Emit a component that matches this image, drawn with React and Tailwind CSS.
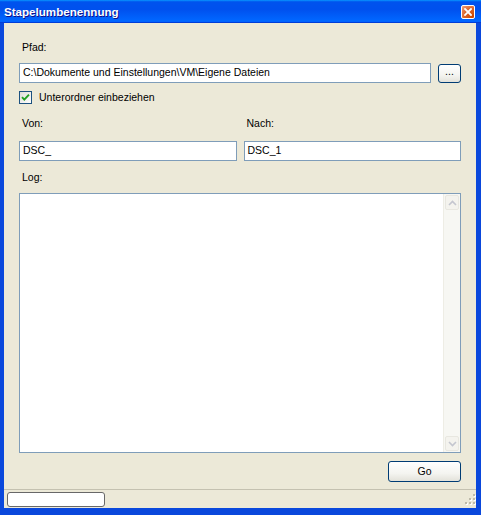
import React from 'react';

/* ─── Small XP-style pieces ─────────────────────────────────── */
const CloseGlyph = () => (
  <svg width="8" height="8" viewBox="0 0 8 8">
    <path d="M1 1l6 6M7 1l-6 6" stroke="#fff" strokeWidth="1.8" strokeLinecap="square" />
  </svg>
);

const CheckGlyph = () => (
  <svg width="9" height="9" viewBox="0 0 9 9">
    <path d="M1 4.2l2.3 2.4L8 1.6" fill="none" stroke="#21a121" strokeWidth="1.9" />
  </svg>
);

const Chevron = ({ up }) => (
  <svg width="9" height="6" viewBox="0 0 9 6">
    <path d={up ? 'M1 5l3.5-3.5L8 5' : 'M1 1l3.5 3.5L8 1'} fill="none" stroke="#c4c6cf" strokeWidth="1.6" />
  </svg>
);

const Grip = () => (
  <svg width="12" height="12" viewBox="0 0 12 12">
    {[[9, 1], [5, 5], [9, 5], [1, 9], [5, 9], [9, 9]].map(([x, y], i) => (
      <g key={i}>
        <rect x={x + 1} y={y + 1} width="2" height="2" fill="#fff" />
        <rect x={x} y={y} width="2" height="2" fill="#bdbaa9" />
      </g>
    ))}
  </svg>
);

const TextBox = ({ value, className = '' }) => (
  <div className={`h-[20px] bg-white border border-[#7f9db9] flex items-center pl-[3px] text-[10.5px] text-black whitespace-nowrap overflow-hidden ${className}`}>
    {value}
  </div>
);

const XpButton = ({ children, className = '' }) => (
  <button className={`border border-[#003c74] rounded-[3px] bg-[linear-gradient(to_bottom,#ffffff,#f4f4f0_60%,#e3e2da)] text-[10.5px] text-black flex items-center justify-center ${className}`}>
    {children}
  </button>
);

const Label = ({ children }) => (
  <div className="h-[13px] leading-[13px] pl-[3px] text-[10.5px] text-black">{children}</div>
);

/* ─── Dialog ────────────────────────────────────────────────── */
export default function App() {
  return (
    <div className="w-[481px] h-[515px] flex flex-col bg-[#0a48dc] font-['Liberation_Sans',Arial,sans-serif]">

      {/* Title bar */}
      <div className="h-[23px] shrink-0 flex items-center justify-between pl-[4px] pr-[6px] bg-[linear-gradient(to_bottom,#0997ff,#0053ee_8%,#0050ee_40%,#0066ff_88%,#0066ff_93%,#005bff_95%,#003dd7_96%,#003dd7)]">
        <span className="text-white font-bold text-[11.6px] [text-shadow:1px_1px_#0f1089]">Stapelumbenennung</span>
        <div className="w-[14px] h-[14px] rounded-[2px] border border-white bg-[radial-gradient(circle_at_90%_90%,#cc4600,#dc6527_55%,#f0a080)] flex items-center justify-center">
          <CloseGlyph />
        </div>
      </div>

      {/* Client area */}
      <div className="flex-1 ml-[4px] mr-[5px] mb-[7px] bg-[#ece9d8] flex flex-col">
        <div className="flex-1 flex flex-col px-[15px] pt-[18px] pb-[7px]">

          <Label>Pfad:</Label>
          <div className="mt-[9px] flex items-center gap-[7px]">
            <TextBox value="C:\Dokumente und Einstellungen\VM\Eigene Dateien" className="flex-1" />
            <XpButton className="w-[23px] h-[19px] leading-none pb-[3px]">...</XpButton>
          </div>

          <div className="mt-[8px] h-[13px] flex items-center gap-[7px]">
            <div className="w-[13px] h-[13px] border border-[#1c5180] bg-[linear-gradient(135deg,#dcdcd7,#ffffff)] flex items-center justify-center">
              <CheckGlyph />
            </div>
            <span className="text-[10.5px] text-black">Unterordner einbeziehen</span>
          </div>

          <div className="mt-[13px] grid grid-cols-2 gap-x-[7px]">
            <Label>Von:</Label>
            <Label>Nach:</Label>
            <TextBox value="DSC_" className="mt-[11px]" />
            <TextBox value="DSC_1" className="mt-[11px]" />
          </div>

          <div className="mt-[10px]">
            <Label>Log:</Label>
          </div>

          {/* Log box with disabled scrollbar */}
          <div className="mt-[9px] flex-1 bg-white border border-[#7f9db9] flex justify-end">
            <div className="w-[17px] bg-[#f7f7f3] border-l border-[#eeede5] flex flex-col justify-between p-[1px]">
              <div className="h-[15px] rounded-[2px] border border-[#e8e7e0] bg-[#f4f3ee] flex items-center justify-center">
                <Chevron up />
              </div>
              <div className="h-[15px] rounded-[2px] border border-[#e8e7e0] bg-[#f4f3ee] flex items-center justify-center">
                <Chevron />
              </div>
            </div>
          </div>

          <div className="mt-[8px] flex justify-end">
            <XpButton className="w-[73px] h-[21px]">Go</XpButton>
          </div>
        </div>

        {/* Status bar */}
        <div className="h-[19px] shrink-0 border-t border-[#c4c1b0] flex items-center justify-between pl-[3px]">
          <div className="w-[98px] h-[15px] rounded-[3px] border border-[#686868] bg-white" />
          <Grip />
        </div>
      </div>
    </div>
  );
}
